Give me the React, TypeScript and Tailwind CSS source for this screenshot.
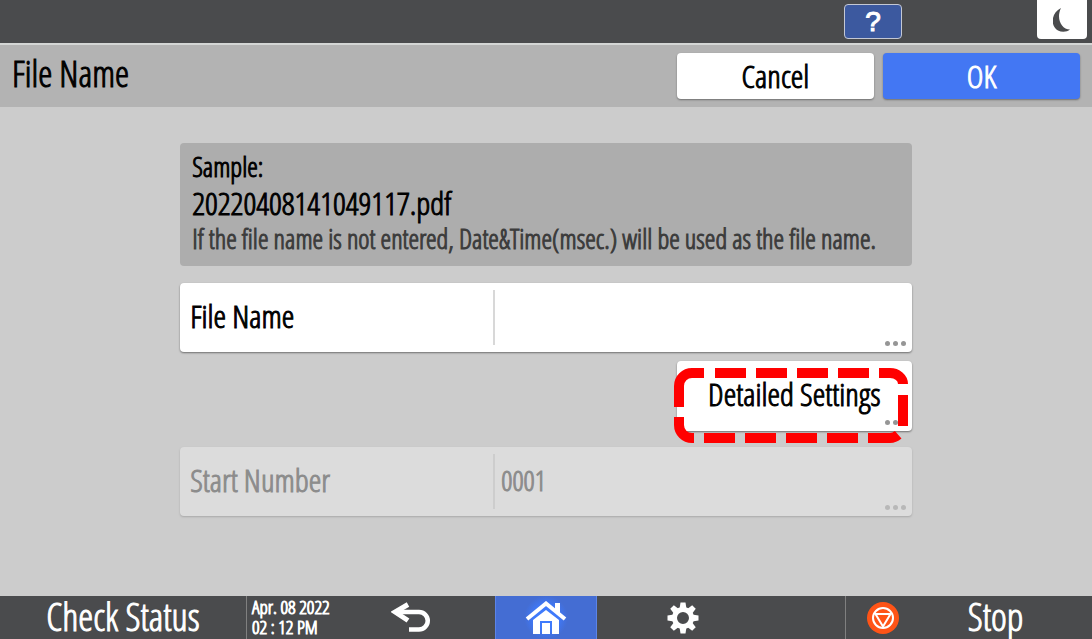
import type { ReactNode } from 'react';

const Dots = () => (
  <span className="absolute right-[6px] bottom-[6px] flex gap-[3px]" aria-hidden="true">
    <span className="w-[5px] h-[5px] rounded-full bg-[#969696]" />
    <span className="w-[5px] h-[5px] rounded-full bg-[#969696]" />
    <span className="w-[5px] h-[5px] rounded-full bg-[#969696]" />
  </span>
);

type FieldProps = {
  id: string;
  label: string;
  value?: string;
  disabled?: boolean;
};

const Field = ({ id, label, value = '', disabled = false }: FieldProps) => (
  <div
    className={`relative flex items-center h-[69px] rounded-[4px] ${
      disabled
        ? 'bg-[#dcdcdc] text-[#8c8c8c] shadow-[0_1px_2px_#a8a8a8]'
        : 'bg-white text-black shadow-[0_1px_2px_#6e6e6e]'
    }`}
  >
    <label htmlFor={id} className="w-[313px] pl-[10px] pb-[4px] text-[32px] leading-[40px] whitespace-nowrap">
      {label}
    </label>
    <input
      id={id}
      type="text"
      defaultValue={value}
      disabled={disabled}
      className={`flex-1 min-w-0 h-[55px] pl-[6px] pr-8 pb-[4px] border-l-2 bg-transparent text-[28px] focus:outline-none ${
        disabled ? 'border-[#cdcdcd]' : 'border-[#d8d8d8]'
      }`}
    />
    <span className={disabled ? 'opacity-50' : ''}>
      <Dots />
    </span>
  </div>
);

const IconButton = ({ label, className, children }: { label: string; className: string; children: ReactNode }) => (
  <button aria-label={label} className={`flex items-center justify-center ${className}`}>
    {children}
  </button>
);

const App = () => {
  return (
    <div className="min-h-screen flex flex-col bg-[#cccccc] text-black font-['Open_Sans_Condensed_Light','Roboto_Condensed',sans-serif] [-webkit-text-stroke:1px]">
      {/* Top bar */}
      <div className="flex justify-end items-start h-[45px] bg-[#4a4b4d] border-b-2 border-[#d4d6d5] pr-[5px]">
        <button className="mt-[4px] mr-[135px] w-[58px] h-[35px] rounded-[4px] border border-[#c4c8d4] bg-[#3c599f] text-white text-[28px] leading-[32px] font-['Liberation_Sans',sans-serif]">
          ?
        </button>
        <IconButton label="Sleep" className="w-[50px] h-[39px] bg-white rounded-b-[4px]">
          <svg width="18" height="24" viewBox="0 0 18 24" fill="#4a4b4d">
            <path d="M8 0C-2 5-3 18 5 22.500C9 24.500 14 24 17 21.500C8 21.500 3 10 8 0Z" />
          </svg>
        </IconButton>
      </div>

      {/* Title row */}
      <div className="flex items-center h-[62px] bg-[#b3b3b3] pl-3 pr-[12px] gap-[9px]">
        <h1 className="flex-1 pb-[4px] text-[36px] leading-[44px]">File Name</h1>
        <button className="w-[197px] h-[46px] rounded-[4px] bg-white text-[32px] leading-[40px] shadow-[0_1px_2px_#6e6e6e]">
          Cancel
        </button>
        <button className="w-[197px] h-[46px] rounded-[4px] bg-[#4377f3] text-white text-[32px] leading-[40px] shadow-[0_1px_2px_#6e6e6e]">
          OK
        </button>
      </div>

      {/* Content */}
      <main className="flex-1 w-[67%] mx-auto pt-9">
        <div className="h-[123px] rounded-[4px] bg-[#adadad] pl-3 pt-[6px] mb-[17px] whitespace-nowrap">
          <p className="text-[27px] leading-[36px]">Sample:</p>
          <p className="text-[32px] leading-[36px]">20220408141049117.pdf</p>
          <p className="text-[27px] leading-[36px] text-[#3c3c3c]">
            If the file name is not entered, Date&amp;Time(msec.) will be used as the file name.
          </p>
        </div>

        <Field id="file-name" label="File Name" />

        <div className="flex justify-end mt-[9px] mb-[16px]">
          <button className="relative w-[235px] h-[70px] rounded-[4px] bg-white text-[32px] leading-[40px] pb-[4px] whitespace-nowrap shadow-[0_1px_2px_#6e6e6e]">
            Detailed Settings
            <Dots />
            {/* Highlight around the button */}
            <svg
              className="absolute -left-[3px] top-[7px] pointer-events-none"
              width="234"
              height="75"
              viewBox="0 0 234 75"
              fill="none"
              stroke="#ff0000"
              strokeWidth="10"
            >
              <path d="M229 58V27M229 16A13 11 0 0 0 216 5H205" />
              <path d="M195 5H40" strokeDasharray="31 10" />
              <path d="M30 5H18A13 13 0 0 0 5 18V39" />
              <path d="M5 49V57A13 13 0 0 0 18 70H20" />
              <path d="M30 70H216Q221 70 225 66" strokeDasharray="31 10" />
            </svg>
          </button>
        </div>

        <Field id="start-number" label="Start Number" value="0001" disabled />
      </main>

      {/* Bottom bar */}
      <footer className="grid grid-cols-[246fr_90fr_159fr_102fr_172fr_76fr_247fr] h-[43px] bg-[#4a4b4d] text-white">
        <button className="pb-[3px] text-[38px] leading-[40px] whitespace-nowrap">Check Status</button>
        <div className="border-l border-[#808080] pl-[5px] pt-[1px] text-[19px] leading-[20px] whitespace-nowrap">
          <p>Apr. 08 2022</p>
          <p>02 : 12 PM</p>
        </div>
        <IconButton label="Back" className="pr-[10px]">
          <svg width="40" height="32" viewBox="0 0 40 32" fill="none" stroke="#fff">
            <path d="M17 2.500L4 10L17 18.500" strokeWidth="5" />
            <path d="M6 10H28A8.500 8.500 0 0 1 28 27.500H18" strokeWidth="4.500" />
          </svg>
        </IconButton>
        <IconButton label="Home" className="border-x border-[#5c84e8] bg-[radial-gradient(circle,#3f7dff_0%,#3f79fa_22%,#446dd3_40%)]">
          <svg width="42" height="34" viewBox="0 0 42 34" fill="#fff">
            <path d="M2 18L21 2.500L40 18" fill="none" stroke="#fff" strokeWidth="4" />
            <path d="M30 2H35V13L30 9Z" />
            <path d="M8 19L21 9L34 19V33H27V20H15V33H8Z" />
            <path d="M17 22H25V33H17Z" />
          </svg>
        </IconButton>
        <IconButton label="Settings" className="">
          <svg width="32" height="32" viewBox="-16 -16 32 32" fill="#fff">
            <circle r="8.500" fill="none" stroke="#fff" strokeWidth="5" />
            {[0, 45, 90, 135, 180, 225, 270, 315].map((angle) => (
              <path key={angle} d="M-3.500 -9L-2.500 -15.500H2.500L3.500 -9Z" transform={`rotate(${angle})`} />
            ))}
          </svg>
        </IconButton>
        <div />
        <button className="flex items-center border-l border-[#808080] pl-[21px] pr-[24px] text-[38px] leading-[40px]">
          <svg className="shrink-0" width="32" height="32" viewBox="0 0 32 32" fill="none" stroke="#fff">
            <circle cx="16" cy="16" r="16" fill="#ff5417" stroke="none" />
            <circle cx="16" cy="16" r="10" strokeWidth="2" />
            <path d="M8.500 12H23.500L16 24.500Z" strokeWidth="2" />
          </svg>
          <span className="flex-1 pl-[24px] pb-[3px]">Stop</span>
        </button>
      </footer>
    </div>
  );
};

export default App;
